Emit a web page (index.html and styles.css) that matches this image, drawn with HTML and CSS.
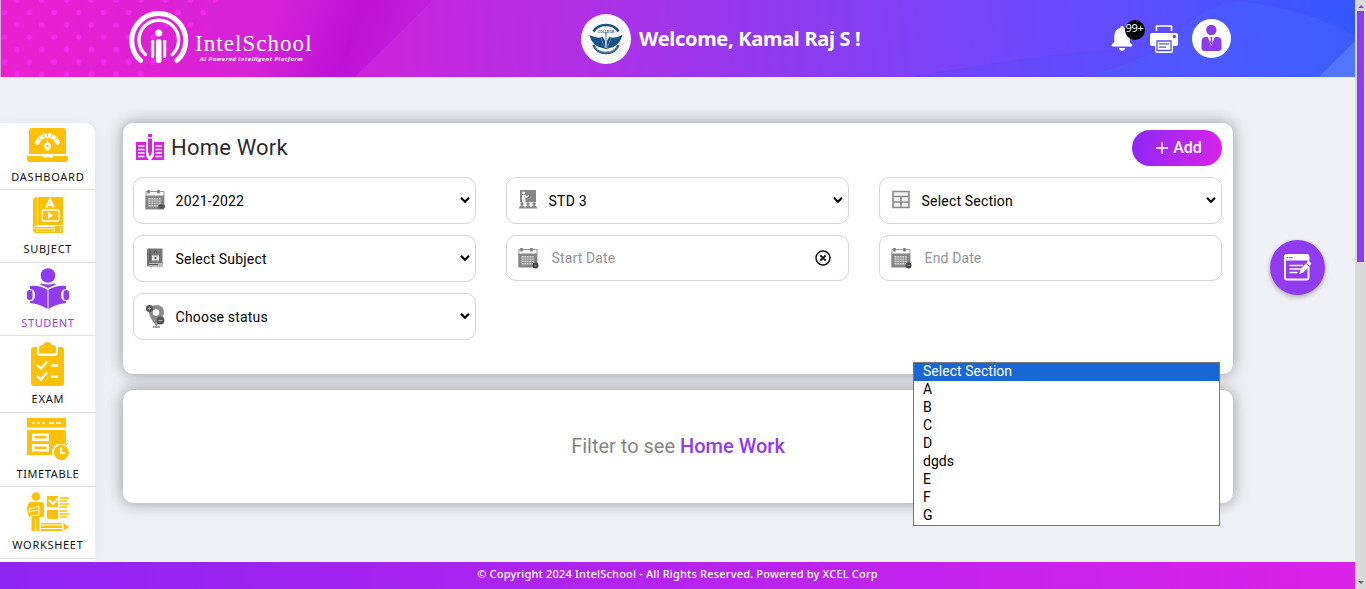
FILE: index.html
```
<!DOCTYPE html>
<html lang="en">
<head>
<meta charset="utf-8">
<title>IntelSchool - Home Work</title>
<link rel="stylesheet" href="styles.css">
</head>
<body>
<svg width="0" height="0" class="defs">
  <symbol id="chevron" viewBox="0 0 12 8"><path d="M2 1.700 6 5.700 10 1.700" fill="none" stroke="#000" stroke-width="2.200"/></symbol>
  <symbol id="calendar" viewBox="0 0 22 22">
    <path d="M2 2.500h18v17H2z" fill="#fff" stroke="#999" stroke-width="1"/>
    <path d="M1.500 6.500h18.500v14H1.500z" fill="#858585"/>
    <path d="M4.500 1v3.500M14.500 1v3.500" stroke="#777" stroke-width="2.400"/>
    <path d="M4.500 9h12v8.500h-12z" fill="#ddd"/>
    <path d="M4.500 11h12M4.500 13.200h12M4.500 15.400h12M7 9v8.500M9.500 9v8.500M12 9v8.500M14.500 9v8.500" stroke="#858585" stroke-width=".8"/>
  </symbol>
</svg>
<div class="screen">
  <div class="app">
    <header class="header">
      <svg class="header-art" width="1355" height="77" viewBox="0 0 1355 77">
        <defs>
          <linearGradient id="base" x1="0" x2="1355" y1="77" y2="0" gradientUnits="userSpaceOnUse">
            <stop offset="0" stop-color="#ea20cf"/><stop offset=".25" stop-color="#d023da"/><stop offset=".4" stop-color="#b62ee3"/>
            <stop offset=".56" stop-color="#9339ee"/><stop offset=".72" stop-color="#7746fa"/><stop offset=".87" stop-color="#554fff"/><stop offset="1" stop-color="#2d58ff"/>
          </linearGradient>
          <linearGradient id="fold" x1="275" x2="400" y1="15" y2="63" gradientUnits="userSpaceOnUse">
            <stop offset="0" stop-color="#b90bd5" stop-opacity="0"/><stop offset=".6" stop-color="#b90bd5" stop-opacity=".75"/><stop offset="1" stop-color="#c01bd8" stop-opacity=".7"/>
          </linearGradient>
          <linearGradient id="wave" x1="900" x2="1250" y1="0" y2="0" gradientUnits="userSpaceOnUse">
            <stop offset="0" stop-color="#6040f5" stop-opacity=".5"/><stop offset="1" stop-color="#4a55ff" stop-opacity=".25"/>
          </linearGradient>
          <pattern id="dots" x="4.500" y="0" width="24.800" height="24.800" patternUnits="userSpaceOnUse">
            <g fill="#f32af0"><circle cx="12.400" cy="0" r="2.800"/><circle cx="12.400" cy="24.800" r="2.800"/><circle cx="0" cy="12.400" r="2.800"/><circle cx="24.800" cy="12.400" r="2.800"/></g>
          </pattern>
        </defs>
        <path fill="url(#base)" d="M0 0h1355v77H0z"/>
        <path fill="url(#fold)" d="M230 0h203l-78 77H160z"/>
        <path fill="url(#dots)" d="M0 0h222l-74 77H0z"/>
        <path fill="url(#wave)" d="M910 77Q1030 55 1120 48 1190 30 1226 0H1355V77z"/>
        <path fill="#4a68ff" opacity=".35" d="M1190 22Q1220 0 1245 2 1310 10 1355 36V77H1080Q1160 60 1190 22z"/>
        <path fill="#5376ff" d="M1355 41v36h-36z"/>
        <path fill="#d7a8dc" d="M0 0h1v77H0z"/>
      </svg>
      <div class="brand">
        <svg width="60" height="54" viewBox="0 0 60 54" fill="none" stroke="#fff" stroke-linecap="round">
          <path d="M11.500 49.500A27 27 0 1 1 48 49.500" stroke-width="5"/>
          <path d="M16.300 43.500A19.800 19.800 0 1 1 43.300 43.500" stroke-width="3.400"/>
          <g fill="#fff" stroke="none"><circle cx="29.700" cy="22" r="3.600"/><rect x="26.900" y="28" width="5.600" height="24" rx="2.500"/><circle cx="23.700" cy="31" r="1.900"/><circle cx="35.700" cy="31" r="1.900"/><rect x="22.200" y="32" width="3" height="15" rx="1.400"/><rect x="34.200" y="32" width="3" height="15" rx="1.400"/></g>
        </svg>
        <div class="brand-text"><span class="brand-name">IntelSchool</span><span class="brand-tag">AI Powered Intelligent Platform</span></div>
      </div>
      <div class="welcome">
        <svg width="50" height="50" viewBox="0 0 50 50">
          <circle cx="25" cy="25" r="25" fill="#fafafa"/>
          <path d="M12.500 17.500q4-6.500 12.500-6.500t12.500 6.500" fill="none" stroke="#185387" stroke-width="2.600"/>
          <path d="M12.500 31q3 8 12.500 8t12.500-8" fill="none" stroke="#315f85" stroke-width="2.300"/>
          <path d="M14.500 34q4.500 4 10.500 4t10.500-4" fill="none" stroke="#dfe8ef" stroke-width=".7" stroke-dasharray="1 1"/>
          <path d="M8.500 21q8 4 13 2l3 4V18h1v9l3-4q5 2 13-2-2 8-9 12l-7.500 2-7.500-2Q10 29 8.500 21z" fill="#185387"/>
          <path d="M25 20l1.300 4-.6 10h-1.400l-.6-10z" fill="#b7c8d5"/><path d="M20 24l4 10M30 24l-4 10" stroke="#87a6bd" stroke-width=".6"/>
          <text x="25" y="19" text-anchor="middle" class="crest-text">COLLEGE</text>
        </svg>
        <span class="welcome-text">Welcome, Kamal Raj S !</span>
      </div>
      <div class="actions">
        <div class="bell">
          <svg width="22" height="25" viewBox="0 0 22 25" fill="#fff"><path d="M11 0q1.700 0 1.700 2 6 1.400 6 8.500v4.500q0 2 2.300 3.200 1 1.800-.6 2.300H1.600Q0 20 1 18.200q2.300-1.200 2.300-3.200v-4.500Q3.300 3.400 9.300 2 9.300 0 11 0zM7.800 22h6.400q-.5 2.800-3.200 2.800T7.800 22z"/></svg>
          <span class="badge">99+</span>
        </div>
        <svg class="printer" width="28" height="28" viewBox="0 0 28 28"><path d="M6.500 6V1h15v5" fill="none" stroke="#fff" stroke-width="1.700" stroke-linejoin="round"/><path d="M2 8h24q2 0 2 2v9q0 2-2 2h-3v5q0 2-2 2H7q-2 0-2-2v-5H2q-2 0-2-2v-9q0-2 2-2z" fill="#fff"/><circle cx="24.300" cy="11.500" r="1.700" fill="#5150f8"/><path d="M7 16h14v9.500H7z" fill="#fff" stroke="#5951f8" stroke-width="1.300"/><path d="M9 18.800h10M9 22.200h7" stroke="#5951f8" stroke-width="1.300"/></svg>
        <svg class="avatar" width="39" height="39" viewBox="0 0 39 39"><circle cx="19.500" cy="19.500" r="19.500" fill="#fff"/><circle cx="19.300" cy="11" r="5.200" fill="#8e3bee"/><path d="M14 18h11q4.500 0 4.500 5v6q0 3-3 3h-14q-3 0-3-3v-6q0-5 4.500-5z" fill="#8e3bee"/><path d="M15.800 18h7l-3.500 9z" fill="#fff"/><path d="M18.300 18h2.200l-.5 2 .6 3.500-1.200 2.500-1.200-2.500.6-3.500z" fill="#8e3bee"/></svg>
      </div>
    </header>

    <div class="body">
      <nav class="sidebar">
        <a class="nav-item dash"><svg width="42" height="36" viewBox="0 0 42 36" fill="#ffc107"><path d="M5 1h31q3 0 3 3v23H2V4q0-3 3-3zM0 29h16v1.500h10V29h15v3q0 3-3 3H3q-3 0-3-3z"/><path d="M10.500 15.500a10.700 10.700 0 0 1 20 0" fill="none" stroke="#fff" stroke-width="4.600" stroke-linecap="round"/><path d="M10.500 11l4 2.500M15 6.500l2.500 4M20.500 5v4.500M26 6.500l-2.500 4M30.500 11l-4 2.500" stroke="#ffc107" stroke-width="1"/><path d="M20.500 11l.8 4.500q3.200 1.500 2.700 4-1 3-3.500 4.800Q18 22.500 17 19.500q-.5-2.500 2.700-4z" fill="#fff"/><circle cx="20.500" cy="19" r="1.300"/></svg><span>DASHBOARD</span></a>
        <a class="nav-item subj"><svg width="30" height="37" viewBox="0 0 30 37" fill="#ffc107"><path d="M6 0h24v28H5V0zM4 0v29q-4 0-4 3V4q0-4 4-4zM3 30h27v1.500H3v3h27V36H3q-3 0-3-3t3-3z"/><path d="M3 32.300h18V34H3zM22 29h5v7l-2.500-2-2.500 2zM28 29h2v7h-2z"/><path d="M13.500 10.500l3.500-8 3.500 8M14.500 8h5" stroke="#fff" stroke-width="2.100" fill="none"/><rect x="9" y="13" width="17" height="11" rx="2" fill="none" stroke="#fff" stroke-width="1.300"/><path d="M15 15l5 3.500-5 3.500z" fill="#fff"/></svg><span>SUBJECT</span></a>
        <a class="nav-item stud"><svg width="42" height="41" viewBox="0 0 42 41" fill="#903bef"><circle cx="21" cy="7.500" r="7.300"/><path d="M14 15.500q7 2 14 0l1 1-8 3.500-8-3.500zM3 18q10-1 17.500 4v19q-7.500-5-17.500-6v-2q5 0 5-6t-5-6zM39 18q-10-1-17.500 4v19q7.500-5 17.500-6v-2q-5 0-5-6t5-6z"/><rect y="22" width="5.500" height="10" rx="2.500"/><rect x="36.500" y="22" width="5.500" height="10" rx="2.500"/></svg><span>STUDENT</span></a>
        <a class="nav-item exam"><svg width="33" height="44" viewBox="0 0 33 44" fill="#ffc107"><path d="M3 5h3v6q0 3 3 3h15q3 0 3-3V5h3q3 0 3 3v33q0 3-3 3H3q-3 0-3-3V8q0-3 3-3z"/><path d="M8 10V6q0-3 4-3 1-3 4.500-3T21 3q4 0 4 3v4q0 1.500-1.500 1.500h-14Q8 11.500 8 10z"/><path d="M6 23l4 3.500 6-7M6 34l4 3.500 6-7M20 23.500h7M20 34.500h7" fill="none" stroke="#fff" stroke-width="2.300"/></svg><span>EXAM</span></a>
        <a class="nav-item time"><svg width="42" height="42" viewBox="0 0 42 42" fill="#ffc107"><path d="M0 0h39v9.500H0zM0 12h39v16H28v9H0z"/><path d="M5 5h2.500M10.500 5H13M15.500 5H18M22 5h5M29 5h5" stroke="#fff" stroke-width="1.700"/><path d="M5 15.500h17V23H5zM5 26h17v7.500H5z" fill="#fff"/><path d="M7.500 18h12v2.500h-12zM7.500 28.500h12V31h-12z"/><circle cx="34" cy="34" r="9" fill="#fff"/><circle cx="34.300" cy="34.500" r="7.600"/><path d="M31.500 24h5v2h-5zM26 25l3 3M41 25l-3 3" stroke="#ffc107"/><path d="M34 29.500V35h4" fill="none" stroke="#fff" stroke-width="2"/></svg><span>TIMETABLE</span></a>
        <a class="nav-item work"><svg width="42" height="40" viewBox="0 0 42 40" fill="#ffc107"><circle cx="9" cy="4.500" r="4.300"/><path d="M4 10h9q4 0 4 4v11h-4.500v14h-3.300V27H8v12H4.500V25H2l-2-7q0-8 4-8z"/><path d="M3 15l-1 5 9-2M3 17l9-3v9l-9 1" stroke="#fff" fill="none" stroke-width="1"/><path d="M20 4h11v11H20zM20 18h11v9H20zM14 31h21v1.500H14zm0 2.500h21V36H14zm0 3.500h21v2H14zM36.500 31l5.500 4-5.500 4z"/><path d="M32.500 6H42M32.500 9H40M32.500 12H42M32.500 15H40M32.500 19H40M32.500 22H42M32.500 25H40" stroke="#ffc107" stroke-width="1.400"/><path d="M22 8l4 4 8-9" fill="none" stroke="#fff" stroke-width="2"/></svg><span>WORKSHEET</span></a>
      </nav>

      <main class="main">
        <section class="card filters">
          <div class="card-head">
            <svg width="28" height="28" viewBox="0 0 28 28" fill="#d722e6"><path d="M0 8h10v14l3 4H0zM18 8h10v18H15l3-4z"/><path d="M12 0h4v3h-4zM12 4.500h4V18l-2 5-2-5z"/><path d="M10.800 6v12l3.200 8 3.200-8V6" fill="none" stroke="#fff" stroke-width="1.200"/><path d="M2 12h6.500M2 15.500h6.500M2 19h6.500M2 22.500h6.500M19.500 12H26M19.500 15.500H26M19.500 19H26M19.500 22.500H26" stroke="#fff" stroke-width="1.400"/></svg>
            <h1>Home Work</h1>
            <button class="add"><svg width="12" height="12" viewBox="0 0 12 12"><path d="M6 0v12M0 6h12" stroke="#fff" stroke-width="1.400"/></svg><span>Add</span></button>
          </div>
          <div class="grid">
            <div class="field"><svg class="ficon" viewBox="0 0 22 22"><use href="#calendar"/><ellipse cx="17.500" cy="17.500" rx="3.500" ry="2.300" fill="#555"/></svg><span>2021-2022</span><svg class="chev"><use href="#chevron"/></svg></div>
            <div class="field"><svg class="ficon" viewBox="0 0 22 22" fill="#888"><path d="M3 1h16v12H3z"/><circle cx="6.500" cy="4" r="1.500" fill="#fff"/><path d="M5 6h3l2 1 2-1.500v1.500l-2 2-1.500-.5V13H5z" fill="#eee"/><circle cx="5" cy="15" r="1.700"/><circle cx="11" cy="15" r="1.700"/><circle cx="17" cy="15" r="1.700"/><path d="M2 19.500q0-3 3-3t3 3q0-3 3-3t3 3q0-3 3-3t3 3z"/></svg><span>STD 3</span><svg class="chev"><use href="#chevron"/></svg></div>
            <div class="field"><svg class="ficon" viewBox="0 0 22 22" fill="#f3f3f3" stroke="#8a8a8a" stroke-width="1.600"><path d="M3 2.500h16v16H3zM3 7.500h16M3 13h16M11 7.500v11"/></svg><span>Select Section</span><svg class="chev"><use href="#chevron"/></svg></div>
            <div class="field"><svg class="ficon" viewBox="0 0 22 22"><path d="M4.500 1.500h14v18h-14Q3 19.500 3 18V3q0-1.500 1.500-1.500z" fill="#777"/><path d="M5 16h13.500v3H5z" fill="#bbb"/><path d="M6 2v13M5 17.500h9M10 6l1.500-3L13 6" stroke="#555" fill="none"/><rect x="8" y="8.500" width="7" height="5" fill="#eee"/><path d="M10.500 9.500l3 1.500-3 1.500z" fill="#555"/></svg><span>Select Subject</span><svg class="chev"><use href="#chevron"/></svg></div>
            <div class="field date"><svg class="ficon" viewBox="0 0 22 22"><use href="#calendar"/><circle cx="18.500" cy="18.500" r="3" fill="#444"/><circle cx="18.500" cy="18.500" r="1" fill="#888"/></svg><span>Start Date</span><svg class="clear" width="16" height="16" viewBox="0 0 16 16" fill="none" stroke="#111"><circle cx="8" cy="8" r="7" stroke-width="1.500"/><path d="M5.300 5.300l5.400 5.400M10.700 5.300l-5.400 5.400" stroke-width="1.800"/></svg></div>
            <div class="field date"><svg class="ficon" viewBox="0 0 22 22"><use href="#calendar"/><circle cx="18.500" cy="18.500" r="3" fill="#444"/><path d="M17 18.500h3" stroke="#888"/></svg><span>End Date</span></div>
            <div class="field"><svg class="ficon pin" viewBox="0 0 22 24"><path d="M12 1q8 0 8 7.500 0 4-7.500 13.500Q5 13 5 8.500 5 1 12 1z" fill="#8b8b8b"/><circle cx="12" cy="8.500" r="3.200" fill="#fff"/><circle cx="5.500" cy="4.500" r="3.500" fill="#555"/><path d="M4 4.500h3M5.500 3v3" stroke="#aaa"/><circle cx="16.500" cy="16.500" r="3.900" fill="#555"/><path d="M14.500 16.500h4" stroke="#aaa"/><path d="M9 23h7" stroke="#444"/></svg><span>Choose status</span><svg class="chev"><use href="#chevron"/></svg></div>
          </div>
        </section>
        <section class="card empty"><p>Filter to see <b>Home Work</b></p></section>
      </main>
    </div>

    <footer class="footer">© Copyright 2024 IntelSchool - All Rights Reserved. Powered by XCEL Corp</footer>
    <ul class="dropdown"><li class="selected">Select Section</li><li>A</li><li>B</li><li>C</li><li>D</li><li>dgds</li><li>E</li><li>F</li><li>G</li></ul>
    <button class="fab"><svg width="28" height="27" viewBox="0 0 28 27"><rect x="1" y="1" width="23.500" height="24.500" rx="1.500" fill="none" stroke="#fff" stroke-width="1.900"/><path d="M1 1h23.500v5.500H1z" fill="#fff"/><path d="M3 3.500h6" stroke="#903bef" stroke-dasharray="1.400 .7"/><path d="M5.500 11.500H19M5.500 15h11M5.500 18.500h8" stroke="#fff" stroke-width="1.300"/><path d="M15.500 20l1-5 7-7q2-1 4 1.500l-7.500 8.500z" fill="#fff"/><path d="M22.500 9.500l3 3" stroke="#903bef"/></svg></button>
  </div>
  <div class="scrollbar"><i class="up"></i><div class="thumb"></div><i class="down"></i></div>
</div>
</body>
</html>
```

FILE: styles.css
```
* { box-sizing: border-box; }
body { margin: 0; overflow: hidden; font-family: Roboto, "Liberation Sans", sans-serif; background: #f0f1f6; color: #000; }
.defs { position: absolute; }
button { border: 0; padding: 0; font: inherit; }
.screen { display: flex; width: 1366px; height: 589px; }
.app { position: relative; display: flex; flex-direction: column; width: 1355px; }

.header { position: relative; display: flex; flex: none; height: 77px; color: #fff; }
.header-art { position: absolute; inset: 0; }
.brand, .welcome, .actions { position: relative; display: flex; }
.brand { width: 452px; margin-left: 129px; padding-top: 11px; }
.brand-text { display: flex; flex-direction: column; padding: 19px 0 0 6px; }
.brand-name { font: 23px/27px "Liberation Serif", serif; letter-spacing: 1.05px; white-space: nowrap; }
.brand-tag { margin: -2px 0 0 5px; font: italic bold 6px/8px "Open Sans", sans-serif; letter-spacing: .44px; white-space: nowrap; }
.welcome { align-items: flex-start; width: 530px; padding-top: 14px; }
.welcome-text { margin-left: 8px; font: bold 20px/49px "Noto Sans", sans-serif; letter-spacing: -.3px; white-space: nowrap; }
.crest-text { font: bold 3.5px "Liberation Sans", sans-serif; fill: #476b85; }
.actions { align-items: flex-start; }
.bell { position: relative; width: 39px; padding-top: 26px; }
.badge { position: absolute; left: 14px; top: 20px; width: 20px; height: 20px; border-radius: 50%; background: #000; font: 11px/16px "Noto Sans", sans-serif; text-align: center; letter-spacing: -.3px; text-indent: -1px; }
.printer { margin-top: 25px; }
.avatar { margin: 19px 0 0 14px; }

.body { display: flex; flex: 1; min-height: 0; padding-top: 46px; }
.sidebar { width: 95px; height: 439px; overflow: hidden; border-top-right-radius: 10px; background: #fff; box-shadow: 0 0 14px rgba(0,0,0,.05); }
.nav-item { display: flex; flex-direction: column; align-items: center; justify-content: space-between; height: 73px; border-bottom: 1px solid #e0e0e3; font: 11px/14px "Noto Sans", sans-serif; letter-spacing: .75px; color: #111; }
.nav-item span { margin-right: -.75px; }
.dash { height: 67px; padding: 4px 0 5px; }
.subj { padding: 7px 0 6px; }
.stud { padding: 5px 0 5px; letter-spacing: .6px; color: #903bef; }
.exam { height: 77px; padding: 6px 0; }
.time { height: 74px; padding: 5px 0 5px; letter-spacing: .6px; }
.work { height: 72px; padding: 5px 0 6px; letter-spacing: .7px; }
.main { display: flex; flex-direction: column; gap: 16px; width: 1110px; margin-left: 28px; }
.card { border-radius: 10px; background: #fff; box-shadow: 0 0 16px rgba(70,70,75,.55); }
.filters { height: 251px; padding: 7px 11px 0 10px; }
.card-head { display: flex; align-items: flex-start; height: 47px; }
.card-head > svg { margin: 4px 7px 0 3px; }
h1 { margin: 0; font-size: 22px; font-weight: 400; line-height: 36px; letter-spacing: .2px; color: #2b2b30; }
.add { display: flex; align-items: center; justify-content: center; gap: 5px; width: 90px; height: 36px; margin-left: auto; padding-left: 4px; border-radius: 18px; background: linear-gradient(100deg, #8d28f5, #d923e9); color: #fff; font-size: 16px; font-weight: 500; }
.add span { padding-bottom: 2px; }
.grid { display: grid; grid-template-columns: repeat(3, 343px); column-gap: 30px; row-gap: 11px; align-items: start; }
.field { display: flex; align-items: center; height: 47px; padding: 0 4px 0 10px; border: 1px solid #d6d6d6; border-radius: 10px; font-size: 14px; letter-spacing: .19px; }
.ficon { width: 22px; height: 22px; margin: 0 9.6px 2px 0; }
.pin { height: 24px; }
.chev { width: 12px; height: 8px; margin: 0 0 1px auto; }
.date { height: 46px; color: #959595; letter-spacing: .12px; }
.date .ficon { margin: 0 12.6px 0 0; }
.date .clear { margin: 0 13px 0 auto; }
.empty { display: flex; justify-content: center; height: 113px; padding-top: 44px; font-size: 20px; line-height: 24px; color: #858585; }
.empty p { margin: 0; }
.empty b { font-weight: 500; color: #903bef; }
.footer { position: relative; flex: none; height: 27px; background: linear-gradient(90deg, #8f25f3, #da22e8); color: #fff; font: 500 11px/24px "Noto Sans", sans-serif; letter-spacing: .19px; text-align: center; }
.dropdown { position: absolute; left: 913px; top: 362px; width: 307px; height: 164px; margin: 0; padding: 0; border: 1px solid #767676; background: #fff; list-style: none; font-size: 14px; line-height: 17px; }
.dropdown li { height: 18px; padding-left: 9px; letter-spacing: .03px; }
.dropdown .selected { background: #1967d2; color: #fff; }
.fab { position: absolute; left: 1270px; top: 240px; display: flex; align-items: center; justify-content: center; width: 55px; height: 55px; border-radius: 50%; background: #903bef; box-shadow: 0 2px 5px rgba(0,0,0,.3); }
.scrollbar { display: flex; flex-direction: column; align-items: center; width: 11px; padding: 5px 0; background: #d9d9d9; }
.thumb { width: 7px; height: 251px; margin: 3px 0 auto 0; background: #903bef; }
.up, .down { border: 3px solid transparent; border-top-width: 0; border-bottom-color: #903bef; }
.down { border-top: 3px solid #666; border-bottom: 0; }
```
